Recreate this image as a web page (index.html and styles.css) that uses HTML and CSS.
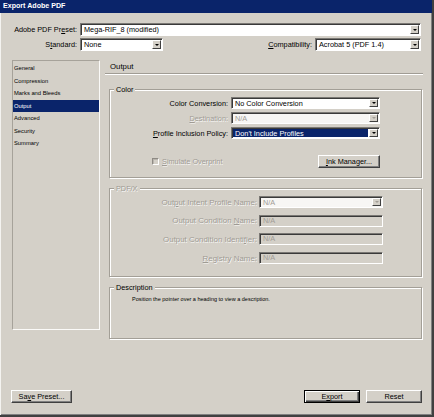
FILE: index.html
```html
<!DOCTYPE html>
<html>
<head>
<meta charset="utf-8">
<title>Export Adobe PDF</title>
<link rel="stylesheet" href="styles.css">
</head>
<body>
<div class="window">
  <div class="titlebar">Export Adobe PDF</div>

  <div class="row row-preset">
    <span class="lbl lbl-top">Adobe PDF Pr<u>e</u>set:</span>
    <div class="combo combo-preset"><span class="val">Mega-RIF_8 (modified)</span><span class="drop"></span></div>
  </div>

  <div class="row row-std">
    <span class="lbl lbl-top">S<u>t</u>andard:</span>
    <div class="combo combo-std"><span class="val">None</span><span class="drop"></span></div>
    <span class="lbl lbl-compat"><u>C</u>ompatibility:</span>
    <div class="combo combo-compat"><span class="val">Acrobat 5 (PDF 1.4)</span><span class="drop"></span></div>
  </div>

  <div class="main">
    <ul class="nav">
      <li>General</li>
      <li>Compression</li>
      <li>Marks and Bleeds</li>
      <li class="active">Output</li>
      <li>Advanced</li>
      <li>Security</li>
      <li>Summary</li>
    </ul>

    <div class="panel">
      <div class="panel-title">Output</div>
      <div class="sep"></div>

      <div class="group group-color">
        <div class="gtitle">Color</div>
        <div class="frow">
          <span class="flbl">Color Conversion:</span>
          <div class="combo combo-c"><span class="val">No Color Conversion</span><span class="drop"></span></div>
        </div>
        <div class="frow">
          <span class="flbl disabled"><u>D</u>estination:</span>
          <div class="combo combo-c is-disabled"><span class="val">N/A</span><span class="drop"></span></div>
        </div>
        <div class="frow">
          <span class="flbl"><u>P</u>rofile Inclusion Policy:</span>
          <div class="combo combo-c"><span class="val selected">Don't Include Profiles</span><span class="drop"></span></div>
        </div>
        <div class="crow">
          <span class="check disabled"><span class="box"></span><span><u>S</u>imulate Overprint</span></span>
          <span class="btn btn-ink"><u>I</u>nk Manager...</span>
        </div>
      </div>

      <div class="group group-pdfx">
        <div class="gtitle disabled">PDF/X</div>
        <div class="xrow">
          <span class="xlbl disabled">Out<u>p</u>ut Intent Profile Name:</span>
          <div class="combo combo-x is-disabled"><span class="val">N/A</span><span class="drop"></span></div>
        </div>
        <div class="xrow">
          <span class="xlbl disabled">Output Condition <u>N</u>ame:</span>
          <div class="field"><span>N/A</span></div>
        </div>
        <div class="xrow">
          <span class="xlbl disabled">Output Condition Identi<u>f</u>ier:</span>
          <div class="field"><span>N/A</span></div>
        </div>
        <div class="xrow">
          <span class="xlbl disabled"><u>R</u>egistry Name:</span>
          <div class="field"><span>N/A</span></div>
        </div>
      </div>

      <div class="group group-desc">
        <div class="gtitle">Description</div>
        <p class="desc">Position the pointer over a heading to view a description.</p>
      </div>
    </div>
  </div>

  <div class="footer">
    <span class="btn btn-save">Sa<u>v</u>e Preset...</span>
    <span class="spacer"></span>
    <span class="btn btn-default">E<u>x</u>port</span>
    <span class="btn btn-reset">Reset</span>
  </div>
</div>
</body>
</html>
```

FILE: styles.css
```css
* {
  box-sizing: border-box;
}

html, body {
  margin: 0;
  padding: 0;
  background: #d4d0c8;
}

body {
  font-family: "Liberation Sans", Arial, sans-serif;
  font-size: 7.3px;
  color: #000;
}

u {
  text-decoration: underline;
  text-underline-offset: 1px;
  text-decoration-thickness: 1px;
}

.window {
  width: 434px;
  height: 417px;
  background: #d4d0c8;
  border-right: 2px solid #404040;
  border-bottom: 2px solid #404040;
  box-shadow: inset 1px 0 0 #f4f3f0, inset -1px -1px 0 #808080;
  display: flex;
  flex-direction: column;
}

.titlebar {
  height: 13px;
  line-height: 13px;
  background: #0a246a;
  color: #fff;
  font-weight: bold;
  font-size: 7.1px;
  padding-left: 3px;
}

/* top rows */
.row {
  display: flex;
  align-items: center;
  height: 13px;
  padding-right: 11px;
}

.row-preset {
  margin-top: 10px;
}

.row-std {
  margin-top: 2px;
}

.lbl {
  white-space: nowrap;
}

.lbl-top {
  width: 77px;
  text-align: right;
  margin-right: 3px;
}

.lbl-compat {
  margin-left: auto;
  margin-right: 3px;
}

/* combo boxes */
.combo {
  display: flex;
  height: 13px;
  background: #fff;
  border: 1px solid;
  border-color: #7a7874 #fff #fff #7a7874;
  box-shadow: inset 1px 1px 0 #3a3a3a;
  padding: 1px;
}

.combo .val {
  flex: 1;
  padding-left: 2px;
  line-height: 9px;
  white-space: nowrap;
  overflow: hidden;
}

.combo .drop {
  width: 9px;
  background: #d4d0c8;
  border: 1px solid;
  border-color: #fff #404040 #404040 #fff;
  display: flex;
  align-items: center;
  justify-content: center;
}

.combo .drop::after {
  content: "";
  border-left: 2px solid transparent;
  border-right: 2px solid transparent;
  border-top: 2.5px solid #000;
}

.combo-preset {
  flex: 1;
}

.combo-std {
  width: 83px;
}

.combo-compat {
  width: 106px;
}

.combo.is-disabled {
  background: #f7f6f4;
}

.combo.is-disabled .val {
  color: #a19d96;
}

.combo.is-disabled .drop::after {
  border-top-color: #a19d96;
}

.combo .val.selected {
  background: #0a246a;
  color: #fff;
  margin-right: 1px;
}

/* main area */
.main {
  display: flex;
  align-items: flex-start;
  margin-top: 9px;
}

.nav {
  list-style: none;
  margin: 0 0 0 12px;
  padding: 1px 0 0 0;
  width: 88px;
  height: 270px;
  border: 1px solid;
  border-color: #a6a29a #fbfaf8 #fbfaf8 #a6a29a;
  font-size: 5.8px;
}

.nav li {
  height: 12.5px;
  line-height: 12.5px;
  padding-left: 1px;
  white-space: nowrap;
}

.nav li.active {
  background: #0a246a;
  color: #fff;
}

.panel {
  margin-left: 5px;
  width: 318px;
}

.panel-title {
  height: 13px;
  line-height: 13px;
  padding-left: 5px;
  font-size: 7.8px;
}

.sep {
  border-top: 1px solid #a09c94;
  border-bottom: 1px solid #fff;
}

/* group boxes */
.group {
  margin-left: 4px;
  width: 313px;
  border: 1px solid #a39f97;
  box-shadow: 1px 1px 0 #fff, inset 1px 1px 0 #fff;
}

.gtitle {
  display: table;
  margin: -5px 0 0 4px;
  padding: 0 2px;
  line-height: 9px;
  background: #d4d0c8;
}

.group-color {
  margin-top: 14px;
  padding-bottom: 9px;
}

.frow {
  display: flex;
  align-items: center;
  height: 12px;
  margin-top: 3px;
}

.flbl {
  width: 118px;
  text-align: right;
  margin-right: 3px;
  white-space: nowrap;
}

.combo-c {
  width: 149px;
  height: 12px;
}

.crow {
  display: flex;
  align-items: center;
  justify-content: space-between;
  height: 13px;
  margin-top: 16px;
  padding-left: 42px;
  padding-right: 41px;
}

.check {
  display: flex;
  align-items: center;
  gap: 3px;
}

.check .box {
  width: 7px;
  height: 7px;
  border: 1px solid;
  border-color: #8e8a84 #fff #fff #8e8a84;
  box-shadow: inset 1px 1px 0 #b9b5ae;
  background: #d4d0c8;
}

.disabled {
  color: #9f9b94;
  text-shadow: 0.6px 0.6px 0 rgba(255, 255, 255, 0.85);
}

/* buttons */
.btn {
  display: flex;
  align-items: center;
  justify-content: center;
  height: 13px;
  background: #d4d0c8;
  border: 1px solid;
  border-color: #fff #404040 #404040 #fff;
  box-shadow: inset -1px -1px 0 #808080;
  white-space: nowrap;
}

.btn-ink {
  width: 62px;
}

.btn-default {
  border-color: #000;
  box-shadow: inset 1px 1px 0 #fff, inset -1px -1px 0 #404040, inset -2px -2px 0 #808080;
  width: 56px;
}

.btn-reset {
  width: 56px;
  margin-left: 6px;
}

.btn-save {
  width: 61px;
}

/* PDF/X group */
.group-pdfx {
  margin-top: 10px;
  padding-bottom: 12px;
}

.xrow {
  display: flex;
  align-items: center;
  height: 12px;
  margin-top: 6.7px;
}

.gtitle + .xrow {
  margin-top: 3px;
}

.xlbl {
  width: 147px;
  text-align: right;
  margin-right: 2px;
  white-space: nowrap;
  font-size: 7.9px;
}

.combo-x {
  width: 124px;
  height: 12px;
}

.field {
  width: 124px;
  height: 12px;
  border: 1px solid;
  border-color: #7a7874 #fff #fff #7a7874;
  box-shadow: inset 1px 1px 0 #3a3a3a;
  padding-left: 3px;
  line-height: 10px;
  color: #a19d96;
  background: #d4d0c8;
}

/* description */
.group-desc {
  margin-top: 10px;
  height: 52px;
}

.desc {
  margin: 3px 0 0 0;
  padding-left: 22px;
  font-size: 5.5px;
  line-height: 8px;
}

/* footer */
.footer {
  margin-top: auto;
  display: flex;
  align-items: center;
  padding: 0 10px 12px 11px;
}

.spacer {
  flex: 1;
}
```
